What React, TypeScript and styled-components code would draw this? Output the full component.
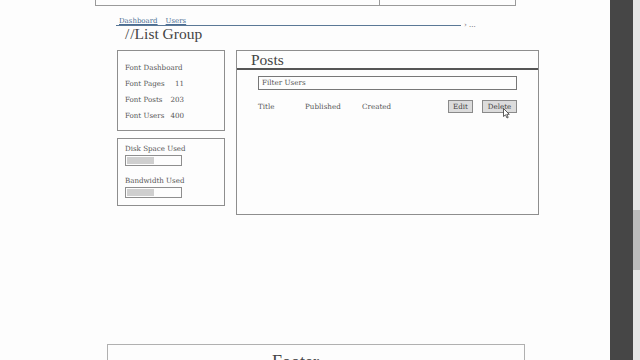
import styled, { createGlobalStyle } from 'styled-components';

const Global = createGlobalStyle`
  html, body { margin:0; padding:0; background:#fdfdfd; }
  body { font-family:"DejaVu Serif", serif; color:#555; }
`;

const Screen = styled.div`
  display:flex;
  width:640px;
  height:360px;
  overflow:hidden;
`;

const Page = styled.div`
  width:610px;
  height:360px;
  overflow:hidden;
`;

const SideStrip = styled.div`
  width:23px;
  background:#464646;
`;

const Track = styled.div`
  width:7px;
  background:#e6e6e6;
  padding-top:210px;
`;

const Thumb = styled.div`
  height:60px;
  background:#bcbcbc;
`;

const TopBox = styled.div`
  margin-left:95px;
  width:419px;
  height:5px;
  border:1px solid #9a9a9a;
  border-top:none;
  display:flex;
`;

const TopCell = styled.div<{ $w?: number }>`
  width:${p => (p.$w ? `${p.$w}px` : 'auto')};
  flex:${p => (p.$w ? 'none' : '1')};
  border-right:${p => (p.$w ? '1px solid #9a9a9a' : 'none')};
`;

const Crumbs = styled.div`
  display:flex;
  align-items:flex-end;
  margin:11px 0 0 116px;
`;

const CrumbLine = styled.div`
  width:342px;
  padding:0 0 0 3px;
  border-bottom:1px solid #5b7896;
  display:flex;
  gap:8px;
  font-size:7px;
  line-height:8px;
  color:#4a6d93;
`;

const Crumb = styled.span`
  text-decoration:underline;
`;

const CrumbTail = styled.span`
  font-size:7px;
  color:#555;
  margin-left:3px;
  line-height:8px;
  transform:translateY(3px);
`;

const Title = styled.h1`
  margin:0 0 0 125px;
  font-family:"Liberation Serif", serif;
  font-weight:normal;
  font-size:15.5px;
  line-height:16px;
  color:#444;
`;

const Slash = styled.span`
  margin-right:1px;
`;

const Content = styled.div`
  display:flex;
  gap:11px;
  margin:8px 0 0 117px;
`;

const LeftCol = styled.div`
  display:flex;
  flex-direction:column;
  gap:7px;
  width:108px;
`;

const Box = styled.div`
  border:1px solid #8e8e8e;
  box-sizing:border-box;
`;

const NavBox = styled(Box)`
  height:81px;
  padding:12px 0 0 7px;
  display:flex;
  flex-direction:column;
  gap:7px;
`;

const NavItem = styled.div`
  width:59px;
  font-size:7.1px;
  line-height:9px;
  color:#555;
  display:flex;
  justify-content:space-between;
  white-space:nowrap;
`;

const UsageBox = styled(Box)`
  height:68px;
  padding:5px 0 0 7px;
`;

const UsageLabel = styled.div`
  font-size:7.1px;
  line-height:9px;
  color:#555;
  white-space:nowrap;
`;

const Bar = styled.div`
  width:53px;
  height:7px;
  border:1px solid #8e8e8e;
  margin:2px 0 10px;
  padding:1px;
  box-sizing:content-box;
`;

const BarFill = styled.div`
  height:100%;
  background:#cfcfcf;
`;

const Posts = styled(Box)`
  width:303px;
  height:165px;
`;

const PostsHead = styled.div`
  height:17px;
  border-bottom:2px solid #555;
  padding-left:14px;
  font-family:"Liberation Serif", serif;
  font-size:15.5px;
  line-height:18px;
  color:#444;
`;

const PostsBody = styled.div`
  padding:6px 21px 0 21px;
`;

const Filter = styled.div`
  height:12px;
  border:1px solid #777;
  padding-left:3px;
  font-size:7.2px;
  line-height:12px;
  color:#555;
`;

const Row = styled.div`
  display:flex;
  align-items:center;
  margin-top:10px;
`;

const Cell = styled.span<{ $w: number }>`
  width:${p => p.$w}px;
  font-size:7.2px;
  color:#555;
`;

const Spacer = styled.div`
  flex:1;
`;

const Btn = styled.div<{ $w: number }>`
  position:relative;
  width:${p => p.$w}px;
  height:13px;
  box-sizing:border-box;
  border:1px solid #8a8a8a;
  background:#dcdcdc;
  font-size:7.1px;
  line-height:11px;
  text-align:center;
  color:#444;
  margin-left:9px;
`;

const Cursor = styled.svg`
  position:absolute;
  left:20px;
  top:7px;
`;

const Footer = styled.div`
  margin:129px 0 0 107px;
  width:418px;
  height:30px;
  border:1px solid #b0b0b0;
  box-sizing:border-box;
  padding:8px 0 0 164px;
  font-family:"Liberation Serif", serif;
  font-size:18px;
  line-height:18px;
  color:#444;
`;

const nav = [
  { label: 'Font Dashboard', value: '' },
  { label: 'Font Pages', value: '11' },
  { label: 'Font Posts', value: '203' },
  { label: 'Font Users', value: '400' },
];

export default function App() {
  return (
    <Screen>
      <Global />
      <Page>
        <TopBox>
          <TopCell $w={283} />
          <TopCell />
        </TopBox>
        <Crumbs>
          <CrumbLine>
            <Crumb>Dashboard</Crumb>
            <Crumb>Users</Crumb>
          </CrumbLine>
          <CrumbTail>› ...</CrumbTail>
        </Crumbs>
        <Title><Slash>/</Slash>/List Group</Title>
        <Content>
          <LeftCol>
            <NavBox>
              {nav.map(n => (
                <NavItem key={n.label}>
                  <span>{n.label}</span>
                  <span>{n.value}</span>
                </NavItem>
              ))}
            </NavBox>
            <UsageBox>
              <UsageLabel>Disk Space Used</UsageLabel>
              <Bar><BarFill style={{ width: '50%' }} /></Bar>
              <UsageLabel>Bandwidth Used</UsageLabel>
              <Bar><BarFill style={{ width: '50%' }} /></Bar>
            </UsageBox>
          </LeftCol>
          <Posts>
            <PostsHead>Posts</PostsHead>
            <PostsBody>
              <Filter>Filter Users</Filter>
              <Row>
                <Cell $w={47}>Title</Cell>
                <Cell $w={57}>Published</Cell>
                <Cell $w={50}>Created</Cell>
                <Spacer />
                <Btn $w={25}>Edit</Btn>
                <Btn $w={35}>
                  Delete
                  <Cursor width="7" height="11" viewBox="0 0 7 11">
                    <path d="M0.5 0.5 L0.5 8.5 L2.5 6.8 L4 10 L5.2 9.4 L3.8 6.3 L6.3 6.3 Z" fill="#fff" stroke="#333" strokeWidth="0.8" />
                  </Cursor>
                </Btn>
              </Row>
            </PostsBody>
          </Posts>
        </Content>
        <Footer>Footer</Footer>
      </Page>
      <SideStrip />
      <Track>
        <Thumb />
      </Track>
    </Screen>
  );
}
